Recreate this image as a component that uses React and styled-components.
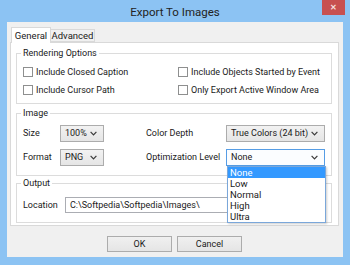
import React from "react";
import styled, { createGlobalStyle } from "styled-components";

const GlobalStyle = createGlobalStyle`
  html, body {
    margin: 0;
    padding: 0;
  }
  body {
    width: 350px;
    height: 265px;
    overflow: hidden;
    font-family: Roboto, "Liberation Sans", Arial, sans-serif;
    font-size: 9px;
    color: #1a1a1a;
  }
`;

const Chevron = () => (
  <svg width="7" height="5" viewBox="0 0 7 5">
    <path d="M0.6 0.8 L3.5 3.8 L6.4 0.8" fill="none" stroke="#3a3a3a" strokeWidth="1.2" />
  </svg>
);

const App = () => {
  return (
    <>
      <GlobalStyle />
      <Window>
        <TitleBar>
          <span />
          <Title>Export To Images</Title>
          <CloseButton>✕</CloseButton>
        </TitleBar>
        <Client>
          <Tabs>
            <Tab active>General</Tab>
            <Tab>Advanced</Tab>
          </Tabs>
          <Panel>
            <Group height={51} top={10} pad="9px 0 0 6px">
              <Legend>Rendering Options</Legend>
              <CheckGrid>
                <CheckRow><Box />Include Closed Caption</CheckRow>
                <CheckRow><Box />Include Objects Started by Event</CheckRow>
                <CheckRow><Box />Include Cursor Path</CheckRow>
                <CheckRow><Box />Only Export Active Window Area</CheckRow>
              </CheckGrid>
            </Group>

            <Group height={63} top={9} pad="7px 0 0 6px">
              <Legend>Image</Legend>
              <FieldGrid>
                <Label>Size</Label>
                <Select width={44}>100%<Chevron /></Select>
                <Label>Color Depth</Label>
                <Select width={99}>True Colors (24 bit)<Chevron /></Select>
                <Label>Format</Label>
                <Select width={44}>PNG<Chevron /></Select>
                <Label>Optimization Level</Label>
                <SelectWrap>
                  <Select width={99} focused>None<Chevron /></Select>
                  <DropList>
                    {["None", "Low", "Normal", "High", "Ultra"].map((o, i) => (
                      <Option key={o} selected={i === 0}>{o}</Option>
                    ))}
                  </DropList>
                </SelectWrap>
              </FieldGrid>
            </Group>

            <Group height={40} top={7} pad="4px 0 0 6px">
              <Legend>Output</Legend>
              <OutputRow>
                <Label style={{ width: 42 }}>Location</Label>
                <TextInput>C:\Softpedia\Softpedia\Images\</TextInput>
              </OutputRow>
            </Group>
          </Panel>
          <ButtonRow>
            <Button>OK</Button>
            <Button>Cancel</Button>
          </ButtonRow>
        </Client>
      </Window>
    </>
  );
};

export default App;

const Window = styled.div`
  width: 350px;
  height: 265px;
  background: #8cc3f3;
  display: flex;
  flex-direction: column;
`;

const TitleBar = styled.div`
  height: 22px;
  display: grid;
  grid-template-columns: 1fr auto 1fr;
  align-items: start;
`;

const Title = styled.div`
  font-size: 11.5px;
  line-height: 22px;
  color: #222;
  padding-top: 1px;
`;

const CloseButton = styled.div`
  justify-self: end;
  margin-right: 5px;
  width: 23px;
  height: 15px;
  background: #c75050;
  color: #f4dede;
  font-size: 8px;
  font-weight: bold;
  display: flex;
  align-items: center;
  justify-content: center;
`;

const Client = styled.div`
  flex: 1;
  margin: 0 7px 8px;
  background: #f0f0f0;
  box-sizing: border-box;
  padding: 5px 4px 0 3px;
  display: flex;
  flex-direction: column;
`;

const Tabs = styled.div`
  display: flex;
  align-items: flex-end;
  height: 15px;
  margin-left: 1px;
  position: relative;
  z-index: 1;
`;

const Tab = styled.div`
  box-sizing: border-box;
  height: ${(p) => (p.active ? "16px" : "13px")};
  width: ${(p) => (p.active ? "40px" : "45px")};
  margin-bottom: ${(p) => (p.active ? "-1px" : "0")};
  margin-left: ${(p) => (p.active ? "0" : "-1px")};
  border: 1px solid #d9d9d9;
  border-bottom: ${(p) => (p.active ? "none" : "1px solid #d9d9d9")};
  background: ${(p) => (p.active ? "#fff" : "#f0f0f0")};
  display: flex;
  align-items: center;
  justify-content: center;
  font-size: 9.5px;
`;

const Panel = styled.div`
  box-sizing: border-box;
  height: 184px;
  background: #fff;
  border: 1px solid #d9d9d9;
  padding: 0 6px 0 5px;
`;

const Group = styled.div`
  position: relative;
  box-sizing: border-box;
  height: ${(p) => p.height}px;
  margin-top: ${(p) => p.top}px;
  padding: ${(p) => p.pad};
  border: 1px solid #dcdcdc;
`;

const Legend = styled.div`
  position: absolute;
  top: -7px;
  left: 4px;
  padding: 0 2px;
  background: #fff;
  line-height: 12px;
`;

const CheckGrid = styled.div`
  display: grid;
  grid-template-columns: 155px 1fr;
  grid-auto-rows: 18px;
`;

const CheckRow = styled.div`
  display: flex;
  align-items: center;
  gap: 3px;
`;

const Box = styled.span`
  box-sizing: border-box;
  width: 10px;
  height: 10px;
  border: 1px solid #8e8f8f;
  background: #fff;
`;

const FieldGrid = styled.div`
  display: grid;
  grid-template-columns: 37px 86px 80px 99px;
  grid-auto-rows: 24px;
  align-items: center;
`;

const Label = styled.span`
  white-space: nowrap;
`;

const SelectWrap = styled.div`
  position: relative;
  z-index: 2;
`;

const Select = styled.div`
  box-sizing: border-box;
  width: ${(p) => p.width}px;
  height: 17px;
  border: 1px solid ${(p) => (p.focused ? "#569de5" : "#acacac")};
  background: ${(p) => (p.focused ? "#fbfdff" : "linear-gradient(#f2f2f2, #e5e5e5)")};
  padding: 0 6px 0 4px;
  display: flex;
  align-items: center;
  justify-content: space-between;
  white-space: nowrap;
`;

const DropList = styled.div`
  position: absolute;
  top: 100%;
  left: 1px;
  width: 99px;
  box-sizing: border-box;
  border: 1px solid #7aa7da;
  background: #fff;
  box-shadow: 1px 1px 2px rgba(0, 0, 0, 0.2);
`;

const Option = styled.div`
  height: 11px;
  line-height: 11px;
  padding-left: 2px;
  font-size: 9.5px;
  background: ${(p) => (p.selected ? "#3399ff" : "transparent")};
  color: ${(p) => (p.selected ? "#fff" : "#1a1a1a")};
`;

const OutputRow = styled.div`
  display: flex;
  align-items: center;
  height: 34px;
`;

const TextInput = styled.div`
  box-sizing: border-box;
  width: 260px;
  height: 16px;
  border: 1px solid #abadb3;
  background: #fff;
  padding-left: 4px;
  display: flex;
  align-items: center;
`;

const ButtonRow = styled.div`
  display: flex;
  justify-content: center;
  gap: 5px;
  padding-top: 10px;
`;

const Button = styled.div`
  box-sizing: border-box;
  width: 65px;
  height: 16px;
  border: 1px solid #acacac;
  background: linear-gradient(#f0f0f0, #e5e5e5);
  display: flex;
  align-items: center;
  justify-content: center;
`;
